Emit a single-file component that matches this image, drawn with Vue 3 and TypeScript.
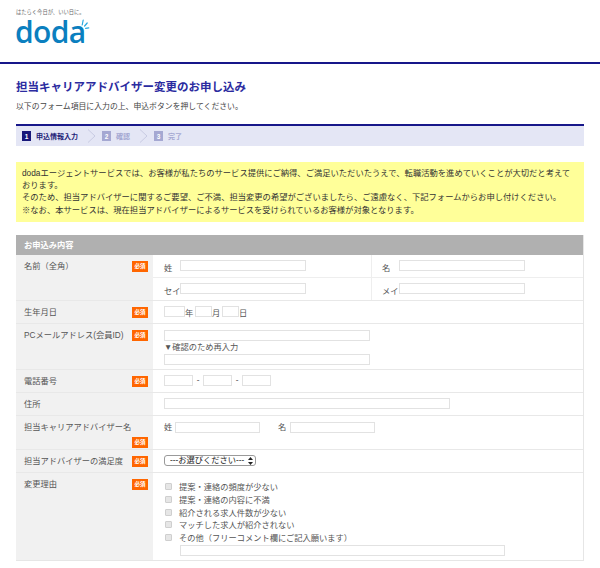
<script setup lang="ts">
const intro = [
  'dodaエージェントサービスでは、お客様が私たちのサービス提供にご納得、ご満足いただいたうえで、転職活動を進めていくことが大切だと考えております。',
  'そのため、担当アドバイザーに関するご要望、ご不満、担当変更の希望がございましたら、ご遠慮なく、下記フォームからお申し付けください。',
  '※なお、本サービスは、現在担当アドバイザーによるサービスを受けられているお客様が対象となります。',
]

const steps = [
  { no: 1, label: '申込情報入力', active: true },
  { no: 2, label: '確認', active: false },
  { no: 3, label: '完了', active: false },
]

const reasons = [
  '提案・連絡の頻度が少ない',
  '提案・連絡の内容に不満',
  '紹介される求人件数が少ない',
  'マッチした求人が紹介されない',
  'その他（フリーコメント欄にご記入願います）',
]
</script>

<template>
  <div class="page">
    <header class="site-header">
      <p class="tagline">はたらく今日が、いい日に。</p>
      <div class="logo">
        <span class="logo-word">doda</span>
        <svg class="logo-rays" width="9" height="11" viewBox="0 0 9 11" fill="none" stroke="#29a9e0" stroke-width="1.2" stroke-linecap="round">
          <path d="M1.2 6 L2.2 1" />
          <path d="M3.6 7 L6.2 4" />
          <path d="M4.6 9.4 L7.8 8.8" />
        </svg>
      </div>
    </header>

    <main class="content">
      <h1 class="title">担当キャリアアドバイザー変更のお申し込み</h1>
      <p class="lead">以下のフォーム項目に入力の上、申込ボタンを押してください。</p>

      <ol class="steps">
        <template v-for="(s, i) in steps" :key="s.no">
          <li class="step" :class="{ 'step--active': s.active }">
            <span class="step-no">{{ s.no }}</span>
            <span class="step-label">{{ s.label }}</span>
          </li>
          <svg v-if="i < steps.length - 1" class="step-arrow" width="9" height="14" viewBox="0 0 9 14" fill="none" stroke="#c9cbe2">
            <path d="M1 0.5 L8 7 L1 13.5" />
          </svg>
        </template>
      </ol>

      <div class="notice">
        <p v-for="line in intro" :key="line">{{ line }}</p>
      </div>

      <section class="form">
        <h2 class="form-head">お申込み内容</h2>

        <div class="row">
          <div class="label"><span>名前（全角）</span><em class="req">必須</em></div>
          <div class="field field--name">
            <div class="name-line">
              <div class="name-cell"><span class="name-tag">姓</span><input class="w126" /></div>
              <div class="name-cell name-cell--right"><span class="name-tag">名</span><input class="w126" /></div>
            </div>
            <div class="name-line">
              <div class="name-cell"><span class="name-tag">セイ</span><input class="w126" /></div>
              <div class="name-cell name-cell--right"><span class="name-tag">メイ</span><input class="w126" /></div>
            </div>
          </div>
        </div>

        <div class="row">
          <div class="label"><span>生年月日</span><em class="req">必須</em></div>
          <div class="field field--inline">
            <input class="w21" /><span class="unit">年</span>
            <input class="w17" /><span class="unit">月</span>
            <input class="w17" /><span class="unit">日</span>
          </div>
        </div>

        <div class="row">
          <div class="label"><span>PCメールアドレス(会員ID)</span><em class="req">必須</em></div>
          <div class="field field--stack">
            <input class="w206" />
            <span class="confirm">▼確認のため再入力</span>
            <input class="w206" />
          </div>
        </div>

        <div class="row">
          <div class="label"><span>電話番号</span><em class="req">必須</em></div>
          <div class="field field--inline">
            <input class="w29" /><span class="dash">-</span>
            <input class="w29" /><span class="dash">-</span>
            <input class="w29" />
          </div>
        </div>

        <div class="row">
          <div class="label"><span>住所</span></div>
          <div class="field field--inline"><input class="w286" /></div>
        </div>

        <div class="row">
          <div class="label"><span>担当キャリアアドバイザー名</span><em class="req">必須</em></div>
          <div class="field field--inline field--advisor">
            <span class="adv-tag">姓</span><input class="w85" />
            <span class="adv-tag adv-tag--second">名</span><input class="w85" />
          </div>
        </div>

        <div class="row">
          <div class="label"><span>担当アドバイザーの満足度</span><em class="req">必須</em></div>
          <div class="field field--inline">
            <div class="select-wrap">
              <select class="select">
                <option>---お選びください---</option>
              </select>
              <svg class="select-arrows" width="5" height="8" viewBox="0 0 5 8" fill="#222">
                <path d="M2.5 0 L5 3 H0 Z" />
                <path d="M2.5 8 L5 5 H0 Z" />
              </svg>
            </div>
          </div>
        </div>

        <div class="row row--last">
          <div class="label"><span>変更理由</span><em class="req">必須</em></div>
          <div class="field field--reasons">
            <label v-for="r in reasons" :key="r" class="reason">
              <input type="checkbox" class="check" />
              <span>{{ r }}</span>
            </label>
            <input class="w325 other" />
          </div>
        </div>
      </section>
    </main>
  </div>
</template>

<style scoped>
.page {
  width: 600px;
  height: 568px;
  overflow: hidden;
  background: #fff;
  color: #333;
  font-family: "Liberation Sans", "Noto Sans CJK JP", sans-serif;
  font-size: 8.25px;
}

.site-header {
  height: 64px;
  box-sizing: border-box;
  padding: 9px 0 0 16px;
  border-bottom: 2px solid #17178a;
}
.tagline {
  margin: 0;
  font-size: 5.3px;
  line-height: 7px;
  color: #666;
}
.logo {
  position: relative;
  width: 74px;
  margin-top: 2px;
}
.logo-word {
  display: block;
  font-family: "Open Sans", sans-serif;
  font-weight: 600;
  font-size: 30px;
  line-height: 28px;
  letter-spacing: -0.6px;
  color: #0b7fbf;
  margin-left: -1px;
}
.logo-rays {
  position: absolute;
  left: 65px;
  top: 1px;
}

.content {
  padding: 0 16px;
}
.title {
  margin: 0;
  padding-top: 15px;
  font-size: 11.5px;
  line-height: 17px;
  font-weight: 700;
  color: #2b2ba0;
}
.lead {
  margin: 5px 0 0;
  font-size: 7.85px;
  line-height: 12px;
  color: #444;
}

.steps {
  display: flex;
  align-items: center;
  list-style: none;
  margin: 11px 0 0;
  padding: 0 0 0 6px;
  height: 22px;
  box-sizing: border-box;
  border-top: 2px solid #17178a;
  background: #e4e6f5;
}
.step {
  display: flex;
  align-items: center;
  gap: 5px;
  color: #a5a8d2;
  font-size: 7px;
  font-weight: 700;
}
.step-no {
  width: 9px;
  height: 10px;
  display: flex;
  align-items: center;
  justify-content: center;
  background: #a5a8d2;
  color: #fff;
  font-size: 6.5px;
}
.step--active {
  color: #1d1d78;
}
.step--active .step-no {
  background: #17177a;
}
.step + .step-arrow {
  margin: 0 6px 0 9px;
}

.notice {
  margin-top: 16px;
  padding: 5px 6px 6px;
  background: #ffff99;
  font-size: 8.3px;
  line-height: 12.2px;
  color: #333;
}
.notice p {
  margin: 0;
}

.form {
  margin-top: 13px;
  border-right: 1px solid #e6e6e6;
  border-bottom: 1px solid #e6e6e6;
}
.form-head {
  margin: 0;
  height: 20px;
  padding-left: 8px;
  background: #b0b0b0;
  color: #fff;
  font-size: 8.25px;
  font-weight: 700;
  line-height: 21px;
}

.row {
  display: grid;
  grid-template-columns: 137px 1fr;
  border-bottom: 1px solid #e8e8e8;
}
.row--last {
  border-bottom: 0;
}
.label {
  display: flex;
  flex-wrap: wrap;
  justify-content: space-between;
  align-items: flex-start;
  align-content: flex-start;
  gap: 3px 2px;
  box-sizing: border-box;
  padding: 6px 5px 0 8px;
  background: #f1f1f1;
  line-height: 12px;
  color: #555;
}
.req {
  display: block;
  width: 16px;
  height: 11px;
  margin-left: auto;
  background: #ff6600;
  color: #fff;
  font-style: normal;
  font-weight: 700;
  font-size: 5.5px;
  line-height: 11px;
  text-align: center;
}
.field {
  min-width: 0;
  color: #555;
}
.field--inline {
  display: flex;
  align-items: center;
  height: 22px;
  padding-left: 11px;
}
.field--advisor {
  height: 33px;
  align-items: flex-start;
  padding-top: 6px;
  box-sizing: border-box;
  line-height: 12px;
}
.field--stack {
  display: flex;
  flex-direction: column;
  align-items: flex-start;
  height: 45px;
  box-sizing: border-box;
  padding: 6px 0 0 11px;
}
.field--reasons {
  display: flex;
  flex-direction: column;
  align-items: flex-start;
  height: 87px;
  box-sizing: border-box;
  padding: 7px 0 0 12px;
}

input {
  display: block;
  box-sizing: border-box;
  height: 11px;
  padding: 0;
  margin: 0;
  border: 1px solid #e2e2e2;
  background: #fff;
  flex: none;
}
.w17 { width: 17px; }
.w21 { width: 21px; }
.w29 { width: 29px; }
.w85 { width: 85px; }
.w126 { width: 126px; }
.w206 { width: 206px; }
.w286 { width: 286px; }
.w325 { width: 325px; }

.name-line {
  display: grid;
  grid-template-columns: 218px 1fr;
  height: 22px;
}
.name-line + .name-line {
  border-top: 1px solid #eee;
}
.name-cell {
  display: flex;
  align-items: center;
  padding-left: 11px;
}
.name-cell--right {
  padding-left: 10px;
  border-left: 1px solid #eee;
}
.name-tag {
  width: 16px;
  flex: none;
  padding-top: 2px;
  white-space: nowrap;
}
.name-cell--right .name-tag {
  width: 17px;
}

.unit {
  width: 10px;
  flex: none;
}
.dash {
  width: 10px;
  flex: none;
  text-align: center;
}
.confirm {
  line-height: 13px;
}
.adv-tag {
  width: 11px;
  flex: none;
}
.adv-tag--second {
  width: 12px;
  margin-left: 18px;
}

.select-wrap {
  position: relative;
  width: 92px;
  height: 11px;
}
.select {
  appearance: none;
  display: block;
  box-sizing: border-box;
  width: 92px;
  height: 11px;
  padding: 0 0 0 5px;
  border: 1px solid #9a9a9a;
  border-radius: 3px;
  background: #fff;
  color: #222;
  font-family: inherit;
  font-size: 8.25px;
  line-height: 9px;
}
.select-arrows {
  position: absolute;
  right: 3px;
  top: 1.5px;
  pointer-events: none;
}

.reason {
  display: flex;
  align-items: center;
  height: 12.7px;
  gap: 7px;
}
input.check {
  appearance: none;
  width: 7px;
  height: 7px;
  margin-top: 1px;
  border: 1px solid #cfcfcf;
  border-radius: 1px;
  background: #e6e6e6;
}
.other {
  margin: 2px 0 0 15px;
}
</style>

<style>
html,
body {
  margin: 0;
  background: #fff;
}
</style>
